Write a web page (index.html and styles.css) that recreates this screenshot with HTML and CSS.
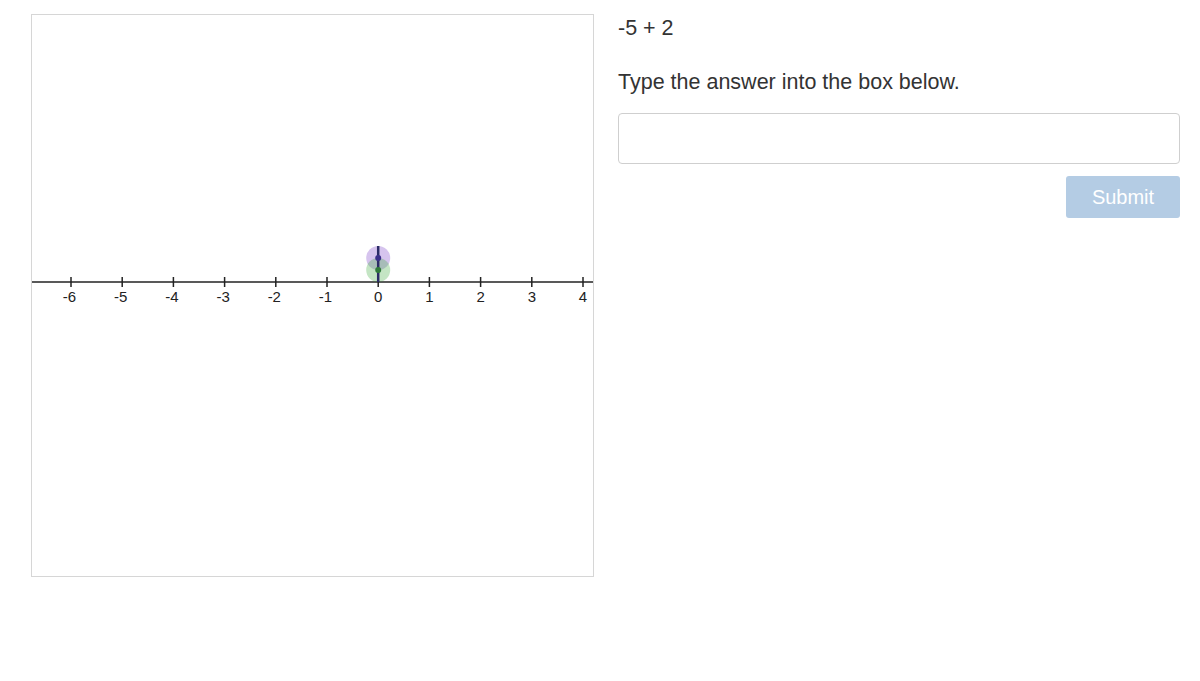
FILE: index.html
```html
<!DOCTYPE html>
<html>
<head>
<meta charset="utf-8">
<link rel="stylesheet" href="styles.css">
</head>
<body>
<div class="page">
  <div class="canvas">
    <svg width="561" height="561" viewBox="0 0 561 561" xmlns="http://www.w3.org/2000/svg">
      <line x1="0" y1="267" x2="561" y2="267" stroke="#222" stroke-width="1.5"/>
      <g stroke="#222" stroke-width="1.5">
        <line x1="39" y1="262" x2="39" y2="272"/>
        <line x1="90.2" y1="262" x2="90.2" y2="272"/>
        <line x1="141.4" y1="262" x2="141.4" y2="272"/>
        <line x1="192.6" y1="262" x2="192.6" y2="272"/>
        <line x1="243.8" y1="262" x2="243.8" y2="272"/>
        <line x1="295" y1="262" x2="295" y2="272"/>
        <line x1="346.2" y1="262" x2="346.2" y2="272"/>
        <line x1="397.4" y1="262" x2="397.4" y2="272"/>
        <line x1="448.6" y1="262" x2="448.6" y2="272"/>
        <line x1="499.8" y1="262" x2="499.8" y2="272"/>
        <line x1="551" y1="262" x2="551" y2="272"/>
      </g>
      <g class="lbl" text-anchor="middle">
        <text x="37.5" y="287">-6</text>
        <text x="88.7" y="287">-5</text>
        <text x="139.9" y="287">-4</text>
        <text x="191.1" y="287">-3</text>
        <text x="242.3" y="287">-2</text>
        <text x="293.5" y="287">-1</text>
        <text x="346.2" y="287">0</text>
        <text x="397.4" y="287">1</text>
        <text x="448.6" y="287">2</text>
        <text x="499.8" y="287">3</text>
        <text x="551" y="287">4</text>
      </g>
      <circle cx="346.2" cy="243" r="12" fill="rgba(120,60,200,0.3)"/>
      <circle cx="346.2" cy="255" r="12" fill="rgba(60,170,60,0.3)"/>
      <line x1="346.2" y1="231" x2="346.2" y2="267" stroke="#2b2b66" stroke-width="2.5"/>
      <circle cx="346.2" cy="243" r="3" fill="#3b2f8a"/>
      <circle cx="346.2" cy="255" r="3" fill="#2f7a3a"/>
    </svg>
  </div>
  <div class="side">
    <div class="expr">-5 + 2</div>
    <div class="prompt">Type the answer into the box below.</div>
    <div class="answer"></div>
    <div class="actions"><button class="submit">Submit</button></div>
  </div>
</div>
</body>
</html>
```

FILE: styles.css
```css
html, body {
  margin: 0;
  padding: 0;
  background: #fff;
}
body {
  font-family: "Liberation Sans", Arial, sans-serif;
  color: #333;
}
.page {
  display: flex;
  align-items: flex-start;
  padding: 14px 20px 0 31px;
  gap: 24px;
}
.canvas {
  border: 1px solid #d6d6d6;
  width: 561px;
  height: 561px;
  flex: none;
}
.canvas svg {
  display: block;
}
.lbl text {
  font-family: "Liberation Sans", Arial, sans-serif;
  font-size: 15px;
  fill: #222;
}
.side {
  flex: 1;
  display: flex;
  flex-direction: column;
}
.expr {
  font-size: 21.5px;
  line-height: 28px;
}
.prompt {
  font-size: 21.5px;
  line-height: 28px;
  margin-top: 26px;
}
.answer {
  margin-top: 17px;
  height: 49px;
  border: 1px solid #cfcfcf;
  border-radius: 4px;
}
.actions {
  display: flex;
  justify-content: flex-end;
  margin-top: 12px;
}
.submit {
  width: 114px;
  height: 42px;
  border: none;
  border-radius: 3px;
  background: #b4cce4;
  color: #fff;
  font-family: "Liberation Sans", Arial, sans-serif;
  font-size: 20px;
}
```
